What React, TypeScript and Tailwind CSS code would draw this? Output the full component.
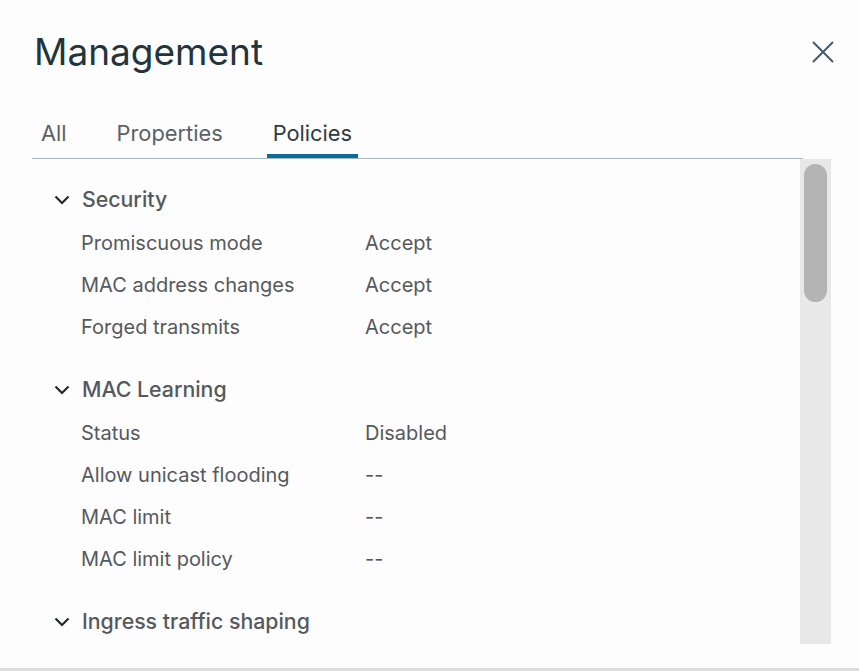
import React from 'react';

type Row = { label: string; value: string };

const sections: { title: string; rows: Row[] }[] = [
  {
    title: 'Security',
    rows: [
      { label: 'Promiscuous mode', value: 'Accept' },
      { label: 'MAC address changes', value: 'Accept' },
      { label: 'Forged transmits', value: 'Accept' },
    ],
  },
  {
    title: 'MAC Learning',
    rows: [
      { label: 'Status', value: 'Disabled' },
      { label: 'Allow unicast flooding', value: '--' },
      { label: 'MAC limit', value: '--' },
      { label: 'MAC limit policy', value: '--' },
    ],
  },
  { title: 'Ingress traffic shaping', rows: [] },
];

function Chevron() {
  return (
    <svg width="16" height="10" viewBox="0 0 16 10" className="shrink-0">
      <polyline points="1.5,1.5 8,8 14.5,1.5" fill="none" stroke="#1f2a30" strokeWidth="2.2" />
    </svg>
  );
}

function CloseIcon() {
  return (
    <svg width="22" height="22" viewBox="0 0 22 22">
      <path d="M1.5 1.5 L20.5 20.5 M20.5 1.5 L1.5 20.5" stroke="#4a5a64" strokeWidth="2" strokeLinecap="round" />
    </svg>
  );
}

export default function App() {
  const tabs = ['All', 'Properties', 'Policies'];

  return (
    <div
      className="w-[859px] h-[671px] bg-[#fdfdfd] flex flex-col overflow-hidden border-b-[3px] border-[#dcdcdc]"
      style={{ fontFamily: 'Inter, "Open Sans", sans-serif' }}
    >
      <div className="flex items-center justify-between pl-[34px] pr-[25px] pt-[24px] h-[78px]">
        <h1 className="text-[37px] leading-none text-[#22343c]">Management</h1>
        <button className="mt-[2px]">
          <CloseIcon />
        </button>
      </div>

      <div className="ml-[32px] w-[771px] mt-[25px] border-b border-[#a9b9c2] flex gap-[38px] pl-[3px]">
        {tabs.map((t) => (
          <div
            key={t}
            className={
              t === 'Policies'
                ? 'px-[6px] h-[55px] flex items-center border-b-[4px] border-[#0a6c99] pt-[10px] text-[21.8px] text-[#2f3a40]'
                : 'px-[6px] h-[55px] flex items-center border-b-[4px] border-transparent pt-[10px] text-[21.8px] text-[#5b6166]'
            }
          >
            {t}
          </div>
        ))}
      </div>

      <div className="flex flex-1 min-h-0">
        <div className="flex-1 pl-[54px] pt-[19px] overflow-hidden">
          {sections.map((s, i) => (
            <div key={s.title} className={i > 0 ? 'mt-[20px]' : ''}>
              <div className="h-[44px] flex items-center gap-[12px]">
                <Chevron />
                <span className="text-[21.3px] font-medium text-[#55595d]">{s.title}</span>
              </div>
              {s.rows.map((r) => (
                <div key={r.label} className="h-[42px] flex items-center text-[20px] text-[#55595c]">
                  <span className="w-[284px] pl-[27px]">{r.label}</span>
                  <span className="pl-[27px]">{r.value}</span>
                </div>
              ))}
            </div>
          ))}
        </div>
        <div className="w-[31px] mr-[28px] h-[485px] bg-[#e8e8e8] pt-[5px] flex justify-center">
          <div className="w-[23px] h-[138px] rounded-full bg-[#b4b4b4]" />
        </div>
      </div>
    </div>
  );
}
